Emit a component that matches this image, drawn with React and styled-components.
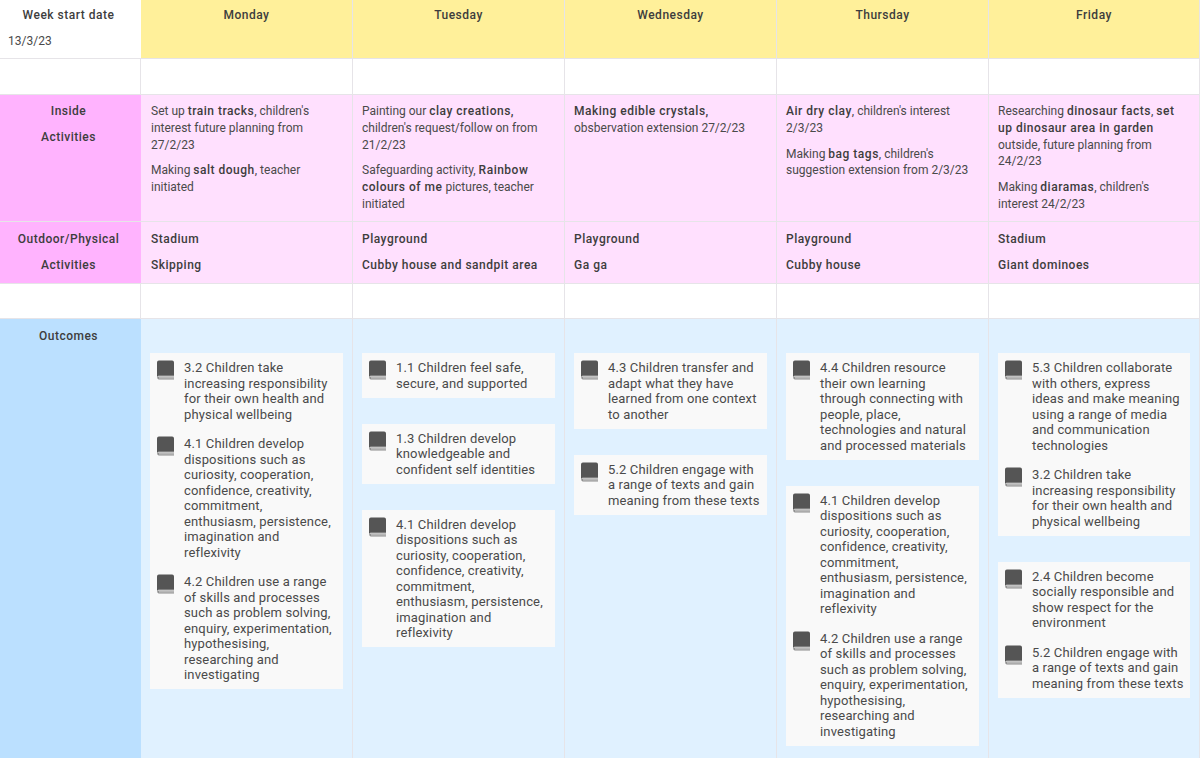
import React from 'react'
import styled, { createGlobalStyle } from 'styled-components'

const days = ['Monday', 'Tuesday', 'Wednesday', 'Thursday', 'Friday']

const inside = [
  [
    <>Set up <b>train tracks</b>, children's interest future planning from 27/2/23</>,
    <>Making <b>salt dough</b>, teacher initiated</>,
  ],
  [
    <>Painting our <b>clay creations,</b> children's request/follow on from 21/2/23</>,
    <>Safeguarding activity, <b>Rainbow colours of me</b> pictures, teacher initiated</>,
  ],
  [<><b>Making edible crystals,</b> obsbervation extension 27/2/23</>],
  [
    <><b>Air dry clay</b>, children's interest 2/3/23</>,
    <>Making <b>bag tags</b>, children's suggestion extension from 2/3/23</>,
  ],
  [
    <>Researching <b>dinosaur facts</b>, <b>set up dinosaur area in garden</b> outside, future planning from 24/2/23</>,
    <>Making <b>diaramas</b>, children's interest 24/2/23</>,
  ],
]

const outdoor = [
  ['Stadium', 'Skipping'],
  ['Playground', 'Cubby house and sandpit area'],
  ['Playground', 'Ga ga'],
  ['Playground', 'Cubby house'],
  ['Stadium', 'Giant dominoes'],
]

const o32 = '3.2 Children take increasing responsibility for their own health and physical wellbeing'
const o41 = '4.1 Children develop dispositions such as curiosity, cooperation, confidence, creativity, commitment, enthusiasm, persistence, imagination and reflexivity'
const o42 = '4.2 Children use a range of skills and processes such as problem solving, enquiry, experimentation, hypothesising, researching and investigating'
const o52 = '5.2 Children engage with a range of texts and gain meaning from these texts'

const outcomes = [
  [[o32, o41, o42]],
  [
    ['1.1 Children feel safe, secure, and supported'],
    ['1.3 Children develop knowledgeable and confident self identities'],
    [o41],
  ],
  [
    ['4.3 Children transfer and adapt what they have learned from one context to another'],
    [o52],
  ],
  [
    ['4.4 Children resource their own learning through connecting with people, place, technologies and natural and processed materials'],
    [o41, o42],
  ],
  [
    ['5.3 Children collaborate with others, express ideas and make meaning using a range of media and communication technologies', o32],
    ['2.4 Children become socially responsible and show respect for the environment', o52],
  ],
]

const BookIcon = () => (
  <Book viewBox="0 0 18 20">
    <path d="M2 0h14a2 2 0 0 1 2 2v14H2.5C1.2 16 .6 16.6.4 17.2H0V2a2 2 0 0 1 2-2z" fill="#555" />
    <path d="M.2 18c0-.8.8-1.2 1.8-1.2h16V20H2c-1 0-1.8-.8-1.8-2z" fill="#8c8c8c" />
    <path d="M2 18h16v.8H2z" fill="#f0f0f0" />
  </Book>
)

const App = () => {
  return (
    <Sheet>
      <GlobalStyle />

      <Corner>
        <Title>Week start date</Title>
        <DateText>13/3/23</DateText>
      </Corner>
      {days.map((d) => (
        <DayCell key={d}>{d}</DayCell>
      ))}

      <BlankCell />
      {days.map((d) => (
        <BlankCell key={d} />
      ))}

      <SideCell $bg="#ffb3fe" $top={8}>
        <Title>Inside</Title>
        <Title>Activities</Title>
      </SideCell>
      {inside.map((paras, i) => (
        <PinkCell key={i} $first={i === 0} $top={8}>
          {paras.map((p, j) => (
            <Para key={j}>{p}</Para>
          ))}
        </PinkCell>
      ))}

      <SideCell $bg="#ffb3fe" $top={9}>
        <Title>Outdoor/Physical</Title>
        <Title>Activities</Title>
      </SideCell>
      {outdoor.map((lines, i) => (
        <PinkCell key={i} $first={i === 0} $top={9}>
          {lines.map((l) => (
            <Title key={l} $left>{l}</Title>
          ))}
        </PinkCell>
      ))}

      <BlankCell />
      {days.map((d) => (
        <BlankCell key={d} />
      ))}

      <SideCell $bg="#bbe0ff" $top={9}>
        <Title>Outcomes</Title>
      </SideCell>
      {outcomes.map((cards, i) => (
        <BlueCell key={i}>
          {cards.map((items, j) => (
            <Card key={j}>
              {items.map((text) => (
                <Item key={text}>
                  <BookIcon />
                  <ItemText>{text}</ItemText>
                </Item>
              ))}
            </Card>
          ))}
        </BlueCell>
      ))}
    </Sheet>
  )
}

export default App

const GlobalStyle = createGlobalStyle`
  html, body {
    margin: 0;
    background: #fff;
    overflow: hidden;
  }
  * {
    box-sizing: border-box;
  }
`

const Sheet = styled.div`
  width: 1200px;
  height: 758px;
  overflow: hidden;
  display: grid;
  grid-template-columns: 141px repeat(4, 212px) 211px;
  grid-template-rows: 59px 36px 127px 62px 35px 460px;
  font-family: Roboto, "Liberation Sans", sans-serif;
  font-size: 12px;
  color: #4a4a4a;
`

const Cell = styled.div`
  border-right: 1px solid #e6e4e8;
  border-bottom: 1px solid #e6e4e8;
  min-width: 0;
`

const Corner = styled(Cell)`
  padding: 7px 4px 0 0;
  border-right: 0;
`

const Title = styled.div`
  font-weight: 500;
  color: #3d3d3d;
  letter-spacing: 0.5px;
  line-height: 16px;
  height: 25.5px;
  text-align: ${(p) => (p.$left ? 'left' : 'center')};
  white-space: nowrap;
`

const DateText = styled.div`
  padding-left: 8px;
  line-height: 16px;
`

const DayCell = styled(Cell)`
  background: #fff09a;
  padding-top: 7px;
  text-align: center;
  font-weight: 500;
  letter-spacing: 0.5px;
  color: #3d3d3d;
  line-height: 16px;
`

const BlankCell = styled(Cell)`
  background: #fff;
`

const SideCell = styled(Cell)`
  background: ${(p) => p.$bg};
  padding: ${(p) => p.$top}px 4px 0 0;
  border-right: 0;
`

const PinkCell = styled(Cell)`
  background: #ffe0fe;
  padding: ${(p) => p.$top}px 9px 0 ${(p) => (p.$first ? 10 : 9)}px;
`

const Para = styled.div`
  line-height: 16.8px;
  margin-bottom: 9px;
  b {
    font-weight: 500;
    letter-spacing: 0.5px;
    color: #3d3d3d;
  }
`

const BlueCell = styled(Cell)`
  background: #e0f1ff;
  padding: 34px 9px 0;
  display: flex;
  flex-direction: column;
  gap: 26px;
`

const Card = styled.div`
  background: #f9f9f9;
  padding: 7px 0 6.5px 7px;
  display: flex;
  flex-direction: column;
  gap: 14px;
`

const Item = styled.div`
  display: flex;
  gap: 10px;
`

const Book = styled.svg`
  flex: none;
  width: 17px;
  height: 20px;
`

const ItemText = styled.div`
  width: 152px;
  font-size: 13px;
  line-height: 15.5px;
  letter-spacing: 0.15px;
  color: #4a4a4a;
`
